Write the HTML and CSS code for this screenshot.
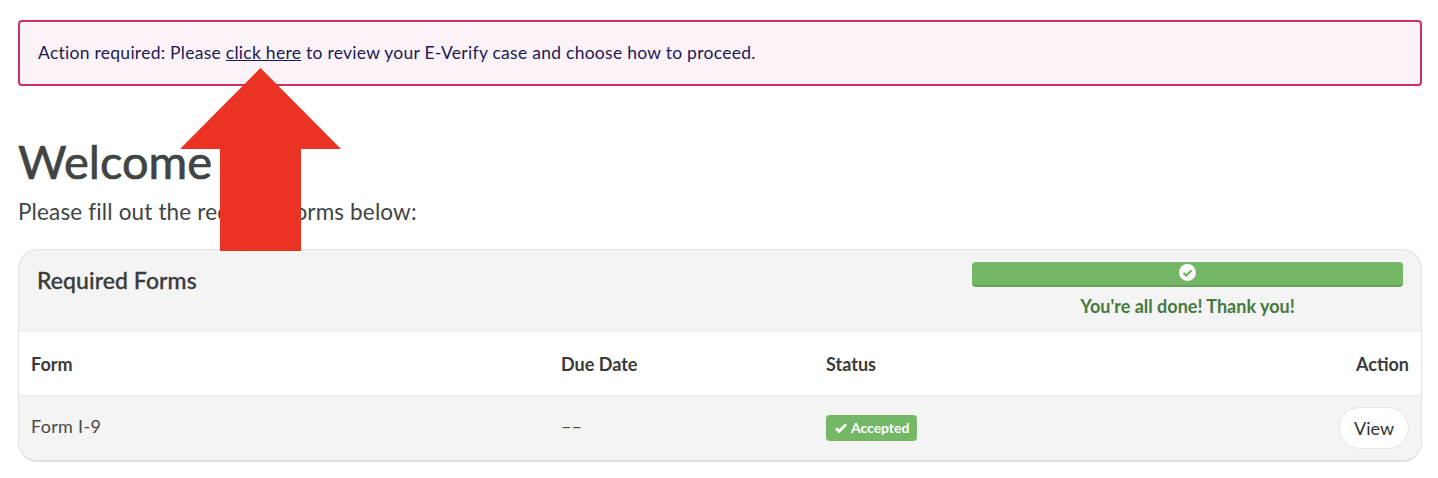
FILE: index.html
```html
<!DOCTYPE html>
<html lang="en">
<head>
<meta charset="utf-8">
<title>Welcome</title>
<link rel="stylesheet" href="styles.css">
</head>
<body>
<div class="alert">Action required: Please <a href="#">click here</a> to review your E-Verify case and choose how to proceed.</div>
<h1 class="title">Welcome</h1>
<p class="lead">Please fill out the required forms below:</p>
<section class="card">
  <header class="card-head">
    <h2 class="card-title">Required Forms</h2>
    <div class="progress-wrap">
      <div class="progress">
        <svg class="progress-icon" viewBox="0 0 18 18"><circle cx="9" cy="9" r="9" fill="#fff"/><path d="M4.8 9.4l2.9 2.8 5.6-5.6" fill="none" stroke="#74b767" stroke-width="2.5"/></svg>
      </div>
      <div class="done">You're all done! Thank you!</div>
    </div>
  </header>
  <div class="row row-head">
    <div class="c-form">Form</div>
    <div class="c-due">Due Date</div>
    <div class="c-status">Status</div>
    <div class="c-action">Action</div>
  </div>
  <div class="row row-body">
    <div class="c-form">Form I-9</div>
    <div class="c-due dash">––</div>
    <div class="c-status"><span class="badge"><svg class="badge-icon" viewBox="0 0 12 10"><path d="M1 5.200l3.200 3.100 6.800-6.800" fill="none" stroke="#fff" stroke-width="2.800"/></svg>Accepted</span></div>
    <div class="c-action"><button class="view">View</button></div>
  </div>
</section>
<svg class="arrow" viewBox="0 0 161 183"><polygon points="80.500,0 161,81 121,81 121,183 40,183 40,81 0,81" fill="#ea3323"/></svg>
</body>
</html>
```
FILE: styles.css
```css
* { box-sizing: border-box; }
html, body { margin: 0; padding: 0; }
body {
  position: relative;
  height: 478px;
  padding: 20px 16px 0 18px;
  background: #fff;
  color: #404444;
  font-family: "Lato", "Noto Sans", sans-serif;
  overflow: hidden;
}
.alert {
  display: block;
  height: 66px;
  padding: 0 18px;
  background: #fcf3f9;
  border: 2px solid #cf2e6e;
  border-radius: 4px;
  color: #1b1a55;
  font-size: 17.500px;
  letter-spacing: .27px;
  line-height: 62px;
}
.alert a { color: #1b1a55; text-decoration: underline; }
.title {
  margin: 46px 0 0;
  font-size: 47px;
  line-height: 58px;
  font-weight: 400;
  -webkit-text-stroke: .7px #404444;
  color: #404444;
}
.lead {
  margin: 8px 0 0;
  font-size: 22.500px;
  letter-spacing: .15px;
  line-height: 28px;
  color: #404444;
}
.card {
  margin-top: 23px;
  height: 213px;
  border: 1px solid #e0e0e0;
  border-bottom-width: 2px;
  border-radius: 20px;
  overflow: hidden;
  background: #f4f4f4;
}
.card-head {
  height: 82px;
  display: flex;
  justify-content: space-between;
  padding: 12px 18px 0;
  border-bottom: 1px solid #ececec;
}
.card-title {
  margin: 3px 0 0;
  font-size: 23px;
  letter-spacing: .07px;
  line-height: 30px;
  font-weight: 500;
  -webkit-text-stroke: .3px #3a3a3a;
  color: #3a3a3a;
}
.progress-wrap { width: 431px; text-align: center; }
.progress {
  height: 25px;
  border-radius: 4px;
  background: #74b767;
  border-bottom: 2px solid #66a05b;
  display: flex;
  justify-content: center;
  padding-top: 2px;
}
.progress-icon { width: 17px; height: 17px; }
.done {
  margin-top: 7px;
  font-size: 18px;
  line-height: 24px;
  font-weight: 700;
  color: #447a3d;
}
.row {
  display: grid;
  grid-template-columns: 530px 265px 1fr auto;
  align-items: center;
  padding: 0 12px;
  font-size: 18px;
}
.row-head {
  height: 64px;
  background: #fff;
  border-bottom: 1px solid #e8e8e8;
  font-weight: 700;
  color: #3a3a3a;
}
.row-body {
  height: 65px;
  padding-bottom: 2px;
  background: #f4f4f4;
  color: #484848;
  letter-spacing: .3px;
}
.row-body .c-form, .row-body .dash { padding-bottom: 4px; }
.dash { letter-spacing: 0; }
.badge {
  display: inline-flex;
  align-items: center;
  gap: 4px;
  height: 26px;
  padding: 0 8px 0 9px;
  border-radius: 4px;
  background: #74b767;
  color: #fff;
  font-size: 14px;
  font-weight: 700;
  letter-spacing: -.05px;
}
.badge-icon { width: 12px; height: 10px; }
.view {
  width: 70px;
  height: 42px;
  border: 1px solid #e4e4e4;
  border-radius: 21px;
  background: #fff;
  color: #333;
  font: inherit;
}
.arrow {
  position: absolute;
  left: 180px;
  top: 68px;
  width: 161px;
  height: 183px;
}
```
